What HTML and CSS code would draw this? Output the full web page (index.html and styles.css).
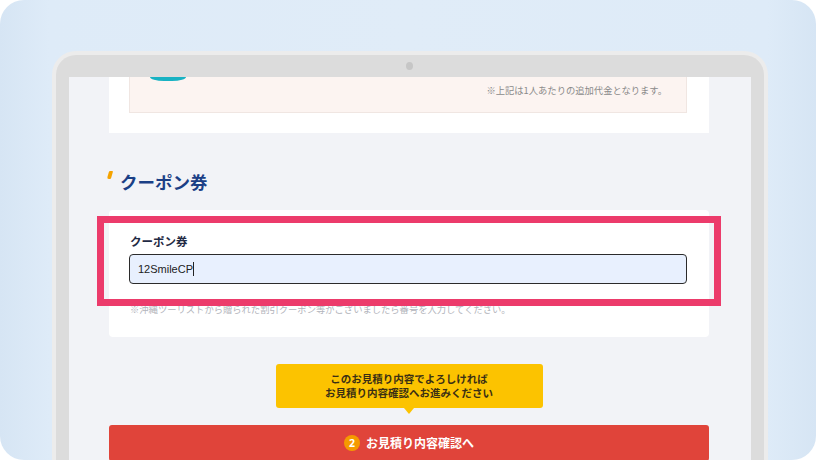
FILE: index.html
```html
<!DOCTYPE html>
<html lang="ja">
<head>
<meta charset="utf-8">
<title>クーポン券</title>
<link rel="stylesheet" href="styles.css">
</head>
<body>
<div class="stage">
  <div class="laptop">
    <div class="bezel-top"><span class="camera"></span></div>
    <div class="screen">
      <div class="card card-top">
        <div class="addon">
          <span class="pill"></span>
          <p class="note">※上記は1人あたりの追加代金となります。</p>
        </div>
      </div>
      <h2 class="heading"><span class="mark"></span>クーポン券</h2>
      <div class="card card-coupon">
        <div class="label">クーポン券</div>
        <div class="input">12SmileCP<span class="caret"></span></div>
        <p class="hint">※沖縄ツーリストから贈られた割引クーポン等がございましたら番号を入力してください。</p>
        <div class="highlight"></div>
      </div>
      <div class="cta-area">
        <div class="callout">このお見積り内容でよろしければ<br>お見積り内容確認へお進みください</div>
        <div class="cta"><span class="num">2</span>お見積り内容確認へ</div>
      </div>
    </div>
  </div>
</div>
</body>
</html>
```
FILE: styles.css
```css
html, body {
  margin: 0;
  padding: 0;
  background: #ffffff;
}
body {
  font-family: "Noto Sans CJK JP", "Noto Sans", sans-serif;
}
.stage {
  width: 816px;
  height: 460px;
  border-radius: 24px;
  background: linear-gradient(90deg, #d6e5f4 0%, #deebf8 6%, #e0ecf8 50%, #deebf8 94%, #d6e5f4 100%);
  overflow: hidden;
  padding: 51px 0 0 52px;
  box-sizing: border-box;
}
.laptop {
  width: 682px;
  height: 420px;
  border: 4px solid #ececec;
  border-bottom: 0;
  border-radius: 24px 24px 0 0;
  background: #dcdcdc;
  padding: 0 13px;
}
.bezel-top {
  height: 22px;
  display: flex;
  align-items: center;
  justify-content: center;
}
.camera {
  width: 7px;
  height: 8px;
  border-radius: 50%;
  background: #c6c6c6;
  margin-left: -2px;
}
.screen {
  width: 682px;
  height: 400px;
  background: #f2f3f7;
  overflow: hidden;
}
.card {
  margin-left: 40px;
  width: 600px;
  background: #ffffff;
  box-sizing: border-box;
}
.card-top {
  height: 56px;
  padding: 0 22px 0 20px;
}
.addon {
  height: 36px;
  box-sizing: border-box;
  background: #fcf4f1;
  border: 1px solid #f0e6e2;
  border-top: 0;
  position: relative;
  display: flex;
  align-items: flex-start;
  justify-content: space-between;
  padding: 0 19px 0 20px;
}
.pill {
  width: 36px;
  height: 4px;
  background: #18b2c3;
  border-radius: 0 0 14px 14px / 0 0 4px 4px;
}
.note {
  margin: 6px 0 0;
  font-size: 9.3px;
  line-height: 14px;
  color: #8a8a8a;
}
.heading {
  margin: 37px 0 16px 38px;
  font-size: 17.5px;
  line-height: 24px;
  font-weight: 700;
  color: #1b3f86;
  display: flex;
  align-items: center;
}
.mark {
  width: 4px;
  height: 8px;
  background: #f5a300;
  transform: skewX(-16deg);
  margin: -14px 8px 0 1px;
  border-radius: 1px 1px 1px 2px;
}
.card-coupon {
  position: relative;
  border-radius: 4px;
  padding: 23px 22px 21px 20px;
}
.label {
  font-size: 11.5px;
  line-height: 16px;
  font-weight: 700;
  color: #1f2a44;
  margin-left: 1px;
  margin-bottom: 5px;
}
.input {
  height: 30px;
  box-sizing: border-box;
  border: 1.5px solid #2b2b2b;
  border-radius: 4px;
  background: #e8f0fe;
  font-family: "Liberation Sans", "Noto Sans", sans-serif;
  font-size: 11px;
  color: #222;
  display: flex;
  align-items: center;
  padding-left: 8px;
}
.caret {
  width: 1px;
  height: 14px;
  background: #222;
  margin-left: 0;
}
.hint {
  margin: 18px 0 0 1px;
  font-size: 9.3px;
  line-height: 14px;
  color: #b2b4bb;
}
.highlight {
  position: absolute;
  left: -12px;
  top: 6px;
  width: 624px;
  height: 90px;
  box-sizing: border-box;
  border: 7px solid #ec3b6b;
}
.cta-area {
  margin-left: 40px;
  width: 600px;
  display: flex;
  flex-direction: column;
  align-items: center;
}
.callout {
  position: relative;
  margin-top: 27px;
  width: 267px;
  height: 44px;
  box-sizing: border-box;
  background: #fcc300;
  border-radius: 3px;
  font-size: 10.5px;
  line-height: 14px;
  font-weight: 700;
  color: #3a2f14;
  text-align: center;
  padding-top: 8px;
}
.callout::after {
  content: "";
  position: absolute;
  left: 50%;
  bottom: -6px;
  margin-left: -5px;
  border-left: 5px solid transparent;
  border-right: 5px solid transparent;
  border-top: 6px solid #fcc300;
}
.cta {
  margin-top: 17px;
  width: 600px;
  height: 36px;
  background: #e0443a;
  border-radius: 3px;
  display: flex;
  align-items: center;
  justify-content: center;
  color: #ffffff;
  font-size: 12px;
  font-weight: 700;
  padding-bottom: 1px;
  box-sizing: border-box;
}
.num {
  width: 16px;
  height: 16px;
  border-radius: 50%;
  background: #f59a00;
  color: #fff;
  font-size: 10.5px;
  line-height: 16px;
  text-align: center;
  margin-right: 6px;
  font-family: "Noto Sans", sans-serif;
}
```
